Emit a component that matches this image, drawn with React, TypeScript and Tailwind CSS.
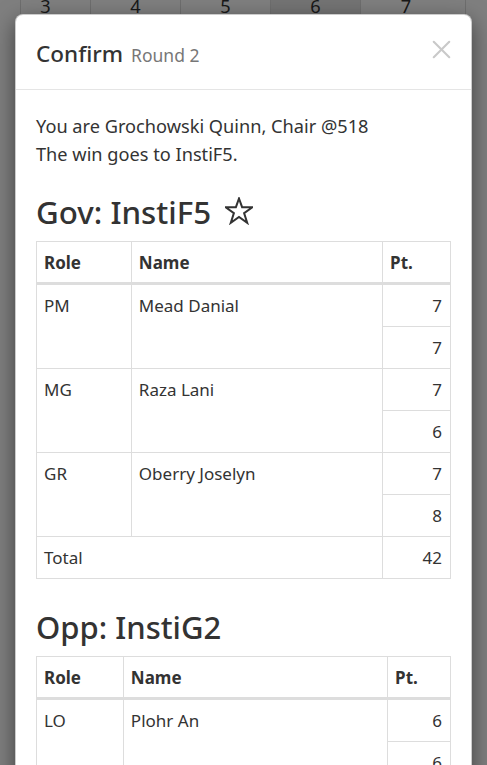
import { X } from "lucide-react";

type Speaker = { role: string; name: string; points: [number, number] };

const gov: Speaker[] = [
  { role: "PM", name: "Mead Danial", points: [7, 7] },
  { role: "MG", name: "Raza Lani", points: [7, 6] },
  { role: "GR", name: "Oberry Joselyn", points: [7, 8] },
];

const opp: Speaker[] = [{ role: "LO", name: "Plohr An", points: [6, 6] }];

const font = { fontFamily: '"Noto Sans", "Open Sans", sans-serif' };

function StarOutline() {
  return (
    <svg width="28" height="28" viewBox="0 0 28 28" className="ml-[14px] -mt-[4px]">
      <polygon
        points="14,1.5 17.1,10.2 27.3,10.2 19.1,16.1 22.2,25.8 14,19.9 5.8,25.8 8.9,16.1 0.7,10.2 10.9,10.2"
        fill="none"
        stroke="#333"
        strokeWidth="2"
        strokeLinejoin="miter"
      />
    </svg>
  );
}

function ScoreTable({
  rows,
  widths,
  total,
}: {
  rows: Speaker[];
  widths: [string, string, string];
  total?: number;
}) {
  return (
    <table className="w-full border-collapse border border-[#ddd] text-[17px] leading-[27px] text-[#333]">
      <thead>
        <tr>
          <th className={`${widths[0]} border border-[#ddd] border-b-[3px] px-[7px] pt-[7px] pb-[6px] text-left font-bold`}>
            Role
          </th>
          <th className={`${widths[1]} border border-[#ddd] border-b-[3px] px-[7px] pt-[7px] pb-[6px] text-left font-bold`}>
            Name
          </th>
          <th className={`${widths[2]} border border-[#ddd] border-b-[3px] px-[7px] pt-[7px] pb-[6px] text-left font-bold`}>
            Pt.
          </th>
        </tr>
      </thead>
      <tbody>
        {rows.map((s) => (
          <>
            <tr key={s.role}>
              <td rowSpan={2} className="border border-[#ddd] px-[7px] py-[7px] align-top">
                {s.role}
              </td>
              <td rowSpan={2} className="border border-[#ddd] px-[7px] py-[7px] align-top">
                {s.name}
              </td>
              <td className="border border-[#ddd] px-[8px] py-[7px] text-right">{s.points[0]}</td>
            </tr>
            <tr key={s.role + "-2"}>
              <td className="border border-[#ddd] px-[8px] py-[7px] text-right">{s.points[1]}</td>
            </tr>
          </>
        ))}
        {total !== undefined && (
          <tr>
            <td colSpan={2} className="border border-[#ddd] px-[7px] py-[7px]">
              Total
            </td>
            <td className="border border-[#ddd] px-[8px] py-[7px] text-right">{total}</td>
          </tr>
        )}
      </tbody>
    </table>
  );
}

const columns = [
  { n: "3", w: "w-[70px]", shift: "-ml-[20px]" },
  { n: "4", w: "w-[90px]", shift: "" },
  { n: "5", w: "w-[90px]", shift: "" },
  { n: "6", w: "w-[90px]", shift: "" },
  { n: "7", w: "w-[105px]", shift: "-ml-[14px]" },
];

export default function App() {
  return (
    <div className="relative h-[765px] w-[487px] overflow-hidden bg-white" style={font}>
      {/* page behind the modal */}
      <div className="-mt-[8px] flex h-[60px] text-[18.2px] leading-[28px] text-[#333]">
        <div className="w-[21px] border-r border-[#ddd]" />
        {columns.map((c) => (
          <div
            key={c.n}
            className={`flex ${c.w} justify-center border-r border-[#ddd] ${c.n === "6" ? "bg-[#e8e8e8]" : ""}`}
          >
            <span className={c.shift}>{c.n}</span>
          </div>
        ))}
      </div>

      <div className="absolute inset-0 bg-black/50" />

      {/* modal */}
      <div className="absolute left-[15px] top-[14px] w-[457px] rounded-[8px] border border-black/20 bg-white shadow-[0_7px_21px_rgba(0,0,0,0.5)]">
        <div className="flex h-[75px] items-start justify-between border-b border-[#e5e5e5] pl-[20px] pr-[14px] pt-[25px]">
          <h4 className="flex items-baseline gap-[8px] text-[22.5px] leading-[28px] font-medium text-[#333]">
            Confirm
            <small className="text-[17.5px] font-normal text-[#777]">Round 2</small>
          </h4>
          <button className="-mt-[6px] text-[#c9c9c9]">
            <X size={31} strokeWidth={1.6} />
          </button>
        </div>

        <div className="px-[20px] pt-[22px] pb-[20px]">
          <p className="text-[18.2px] leading-[28px] text-[#333]">
            You are Grochowski Quinn, Chair @518
            <br />
            The win goes to InstiF5.
          </p>

          <h3 className="mt-[27px] mb-[11px] flex items-center text-[31.3px] leading-[35px] font-medium text-[#333]">
            Gov: InstiF5
            <StarOutline />
          </h3>
          <ScoreTable rows={gov} widths={["w-[95px]", "w-[252px]", "w-[68px]"]} total={42} />

          <h3 className="mt-[31px] mb-[11px] text-[31px] leading-[35px] font-medium text-[#333]">
            Opp: InstiG2
          </h3>
          <ScoreTable rows={opp} widths={["w-[87px]", "w-[265px]", "w-[63px]"]} />
        </div>
      </div>
    </div>
  );
}
